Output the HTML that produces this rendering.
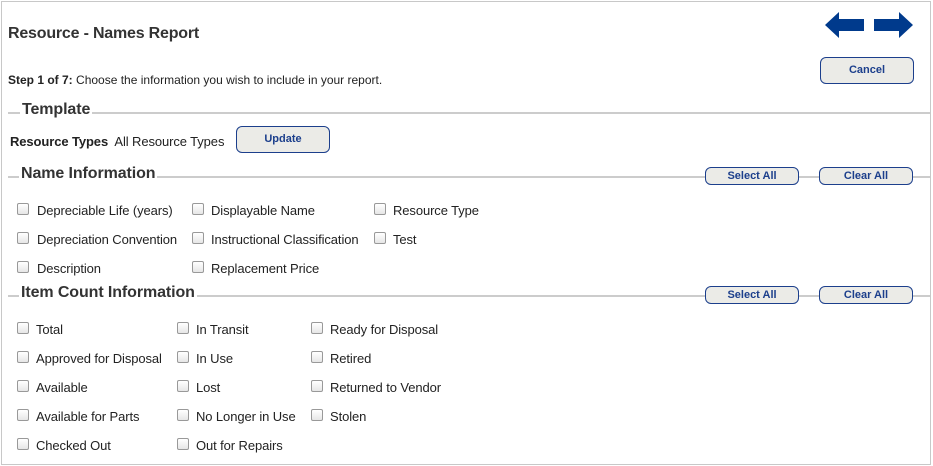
<!DOCTYPE html>
<html><head><style>
*{margin:0;padding:0;box-sizing:border-box}
body{width:933px;height:466px;background:#fff;font-family:"Liberation Sans",Arial,sans-serif;color:#222;position:relative;overflow:hidden}
.frame{position:absolute;left:1px;top:1px;width:930px;height:464px;border:1px solid #c8c8c8}
.a{position:absolute;white-space:nowrap}
.t{font-size:13px;letter-spacing:-0.1px}
.h{font-size:16px;font-weight:bold;color:#333;background:#fff;padding:0 2px;letter-spacing:-0.1px}
.line{position:absolute;left:8px;width:922px;height:2px;background:#ccc}
.btn{position:absolute;background:#ebebe7;border:1px solid #1c3f8c;border-radius:6px;color:#1c3f8c;font-weight:bold;font-size:11px;text-align:center}
.cb{position:absolute;width:12px;height:12px;border:1px solid #999;border-radius:2px;background:linear-gradient(#fff,#e6e6e6)}
</style></head><body>
<div class="frame"></div>
<div class="a" style="left:8px;top:25px;font-size:16px;font-weight:bold;color:#333;letter-spacing:-0.2px">Resource - Names Report</div>
<svg class="a" style="left:824px;top:11px" width="90" height="28" viewBox="0 0 90 28">
<polygon points="1,14 15,1 15,8 40,8 40,20 15,20 15,27" fill="#003a8c"/>
<polygon points="89,14 75,1 75,8 50,8 50,20 75,20 75,27" fill="#003a8c"/>
</svg>
<div class="btn" style="left:820px;top:57px;width:94px;height:27px;line-height:25px">Cancel</div>
<div class="a" style="left:8px;top:73px;font-size:12px"><b>Step 1 of 7:</b> Choose the information you wish to include in your report.</div>
<div class="line" style="top:112px"></div>
<div class="a h" style="left:20px;top:101px">Template</div>
<div class="a t" style="left:10px;top:134px"><b>Resource Types</b>&nbsp; All Resource Types</div>
<div class="btn" style="left:236px;top:126px;width:94px;height:27px;line-height:25px">Update</div>
<div class="line" style="top:176px"></div>
<div class="a h" style="left:19px;top:165px">Name Information</div>
<div class="btn" style="left:705px;top:167px;width:94px;height:18px;line-height:16px">Select All</div>
<div class="btn" style="left:819px;top:167px;width:94px;height:18px;line-height:16px">Clear All</div>
<div class="line" style="top:295px"></div>
<div class="a h" style="left:19px;top:284px">Item Count Information</div>
<div class="btn" style="left:705px;top:286px;width:94px;height:18px;line-height:16px">Select All</div>
<div class="btn" style="left:819px;top:286px;width:94px;height:18px;line-height:16px">Clear All</div>

<div class="cb" style="left:17px;top:203px"></div><div class="a t" style="left:37px;top:203px">Depreciable Life (years)</div>
<div class="cb" style="left:17px;top:232px"></div><div class="a t" style="left:37px;top:232px">Depreciation Convention</div>
<div class="cb" style="left:17px;top:261px"></div><div class="a t" style="left:37px;top:261px">Description</div>
<div class="cb" style="left:192px;top:203px"></div><div class="a t" style="left:211px;top:203px">Displayable Name</div>
<div class="cb" style="left:192px;top:232px"></div><div class="a t" style="left:211px;top:232px">Instructional Classification</div>
<div class="cb" style="left:192px;top:261px"></div><div class="a t" style="left:211px;top:261px">Replacement Price</div>
<div class="cb" style="left:374px;top:203px"></div><div class="a t" style="left:393px;top:203px">Resource Type</div>
<div class="cb" style="left:374px;top:232px"></div><div class="a t" style="left:393px;top:232px">Test</div>

<div class="cb" style="left:17px;top:322px"></div><div class="a t" style="left:36px;top:322px">Total</div>
<div class="cb" style="left:17px;top:351px"></div><div class="a t" style="left:36px;top:351px">Approved for Disposal</div>
<div class="cb" style="left:17px;top:380px"></div><div class="a t" style="left:36px;top:380px">Available</div>
<div class="cb" style="left:17px;top:409px"></div><div class="a t" style="left:36px;top:409px">Available for Parts</div>
<div class="cb" style="left:17px;top:438px"></div><div class="a t" style="left:36px;top:438px">Checked Out</div>
<div class="cb" style="left:177px;top:322px"></div><div class="a t" style="left:196px;top:322px">In Transit</div>
<div class="cb" style="left:177px;top:351px"></div><div class="a t" style="left:196px;top:351px">In Use</div>
<div class="cb" style="left:177px;top:380px"></div><div class="a t" style="left:196px;top:380px">Lost</div>
<div class="cb" style="left:177px;top:409px"></div><div class="a t" style="left:196px;top:409px">No Longer in Use</div>
<div class="cb" style="left:177px;top:438px"></div><div class="a t" style="left:196px;top:438px">Out for Repairs</div>
<div class="cb" style="left:311px;top:322px"></div><div class="a t" style="left:330px;top:322px">Ready for Disposal</div>
<div class="cb" style="left:311px;top:351px"></div><div class="a t" style="left:330px;top:351px">Retired</div>
<div class="cb" style="left:311px;top:380px"></div><div class="a t" style="left:330px;top:380px">Returned to Vendor</div>
<div class="cb" style="left:311px;top:409px"></div><div class="a t" style="left:330px;top:409px">Stolen</div>
</body></html>
